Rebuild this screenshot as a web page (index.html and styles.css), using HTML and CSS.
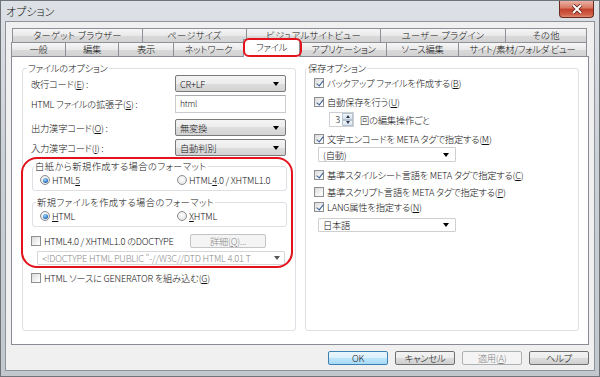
FILE: index.html
```html
<!DOCTYPE html>
<html lang="ja">
<head>
    <meta charset="UTF-8">
    <meta name="viewport" content="width=device-width, initial-scale=1.0">
    <title>オプション</title>
    <link rel="stylesheet" href="styles.css">
</head>
<body>

<div class="window">
    <div class="titlebar">
        <span class="title">オプション</span>
        <span class="close-btn">
            <svg width="12" height="10" viewBox="0 0 12 10">
                <path d="M2 1 L10 9 M10 1 L2 9" stroke="#5b1d14" stroke-width="3.6"/>
                <path d="M2 1 L10 9 M10 1 L2 9" stroke="#fff" stroke-width="2"/>
            </svg>
        </span>
    </div>

    <div class="client">
        <!-- tab headers, two rows -->
        <div class="tab-row row-back">
            <div class="tab">ターゲット ブラウザー</div>
            <div class="tab">ページサイズ</div>
            <div class="tab">ビジュアルサイトビュー</div>
            <div class="tab">ユーザー プラグイン</div>
            <div class="tab">その他</div>
        </div>
        <div class="tab-row row-front">
            <div class="tab">一般</div>
            <div class="tab">編集</div>
            <div class="tab">表示</div>
            <div class="tab">ネットワーク</div>
            <div class="tab active">ファイル</div>
            <div class="tab">アプリケーション</div>
            <div class="tab">ソース編集</div>
            <div class="tab">サイト/素材/フォルダ ビュー</div>
        </div>

        <div class="panel">
            <fieldset class="group group-file">
                <legend>ファイルのオプション</legend>

                <div class="field-row">
                    <span>改行コード(<u>E</u>) :</span>
                    <div class="combo">CR+LF<i class="arrow"></i></div>
                </div>
                <div class="field-row">
                    <span>HTML ファイルの拡張子(<u>S</u>) :</span>
                    <div class="textbox">html</div>
                </div>
                <div class="field-row gap">
                    <span>出力漢字コード(<u>O</u>) :</span>
                    <div class="combo">無変換<i class="arrow"></i></div>
                </div>
                <div class="field-row">
                    <span>入力漢字コード(<u>I</u>) :</span>
                    <div class="combo">自動判別<i class="arrow"></i></div>
                </div>

                <div class="highlight">
                    <fieldset class="subgroup sub-blank">
                        <legend>白紙から新規作成する場合のフォーマット</legend>
                        <div class="radio-row">
                            <label class="opt"><span class="radio on"></span>HTML<u>5</u></label>
                            <label class="opt"><span class="radio"></span>HTML<u>4</u>.0 / XHTML1.0</label>
                        </div>
                    </fieldset>
                    <fieldset class="subgroup sub-new">
                        <legend>新規ファイルを作成する場合のフォーマット</legend>
                        <div class="radio-row">
                            <label class="opt"><span class="radio on"></span><u>H</u>TML</label>
                            <label class="opt"><span class="radio"></span><u>X</u>HTML</label>
                        </div>
                    </fieldset>
                    <div class="doctype-row">
                        <label class="opt"><span class="check"></span>HTML4.0 / XHTML1.0 のDOCTYPE</label>
                        <div class="btn-detail">詳細(<u>Q</u>)...</div>
                    </div>
                    <div class="combo combo-doctype">&lt;!DOCTYPE HTML PUBLIC "-//W3C//DTD HTML 4.01 T<i class="arrow"></i></div>
                </div>

                <div class="check-row generator">
                    <label class="opt"><span class="check"></span>HTML ソースに GENERATOR を組み込む(<u>G</u>)</label>
                </div>
            </fieldset>

            <fieldset class="group group-save">
                <legend>保存オプション</legend>

                <div class="check-row mt1">
                    <label class="opt"><span class="check on"></span>バックアップ ファイルを作成する(<u>B</u>)</label>
                </div>
                <div class="check-row mt5">
                    <label class="opt"><span class="check on"></span>自動保存を行う(<u>U</u>)</label>
                </div>
                <div class="spin-row">
                    <div class="spin">
                        <span class="spin-value">3</span>
                        <span class="spin-arrows"><i class="up"></i><i class="down"></i></span>
                    </div>
                    <span>回の編集操作ごと</span>
                </div>
                <div class="check-row mt5">
                    <label class="opt"><span class="check on"></span>文字エンコードを META タグで指定する(<u>M</u>)</label>
                </div>
                <div class="combo combo-plain auto">(自動)<i class="arrow"></i></div>
                <div class="check-row mt6">
                    <label class="opt"><span class="check on"></span>基準スタイルシート言語を META タグで指定する(<u>C</u>)</label>
                </div>
                <div class="check-row mt3">
                    <label class="opt"><span class="check"></span>基準スクリプト言語を META タグで指定する(<u>P</u>)</label>
                </div>
                <div class="check-row mt1">
                    <label class="opt"><span class="check on"></span>LANG属性を指定する(<u>N</u>)</label>
                </div>
                <div class="combo combo-plain lang">日本語<i class="arrow"></i></div>
            </fieldset>
        </div>

        <div class="buttons">
            <div class="btn default">OK</div>
            <div class="btn">キャンセル</div>
            <div class="btn disabled">適用(<u>A</u>)</div>
            <div class="btn">ヘルプ</div>
        </div>
    </div>
</div>

</body>
</html>
```

FILE: styles.css
```css
* {
    box-sizing: border-box;
}

body {
    margin: 0;
    font-family: "Noto Sans CJK JP", "Noto Sans", sans-serif;
    font-size: 9.3px;
    font-weight: 300;
    letter-spacing: -0.25px;
    font-feature-settings: "palt";
    color: #111;
}

u {
    text-decoration: underline;
    text-underline-offset: 1px;
}

/* window frame */
.window {
    width: 600px;
    height: 377px;
    border: 1px solid #6f747a;
    background: linear-gradient(#dde1e6, #ccd1d7 40%, #c3c8ce);
    padding: 0 4px 5px 4px;
    display: flex;
    flex-direction: column;
}

.titlebar {
    height: 20px;
    display: flex;
    justify-content: space-between;
    align-items: flex-start;
}

.title {
    font-size: 11px;
    letter-spacing: 0;
    line-height: 15px;
    padding: 3px 0 0 1px;
}

.close-btn {
    width: 35px;
    height: 17px;
    margin-right: 1px;
    border: 1px solid #6a2a20;
    border-top: none;
    border-radius: 0 0 4px 4px;
    background: linear-gradient(#eab1a3, #d87560 45%, #c2402c 50%, #d1604a 85%, #e08a6e);
    display: flex;
    align-items: center;
    justify-content: center;
}

.client {
    flex: 1;
    background: #f0f0f0;
    border: 1px solid #8e9399;
    padding: 6px 5px 0 5px;
    display: flex;
    flex-direction: column;
}

/* tabs */
.tab-row {
    display: flex;
    height: 14px;
}

.row-back {
    margin-left: 1px;
}

.row-back .tab {
    letter-spacing: 0.3px;
}

.tab {
    border: 1px solid #8d9096;
    border-right: none;
    border-bottom: none;
    background: linear-gradient(#f6f6f6, #e9e9e9 50%, #dadada 50%, #d2d2d2);
    text-align: center;
    line-height: 12px;
    white-space: nowrap;
}

.tab:last-child {
    border-right: 1px solid #8d9096;
}

.row-back .tab:nth-child(1) { width: 130px; }
.row-back .tab:nth-child(2) { width: 104px; }
.row-back .tab:nth-child(3) { width: 134px; }
.row-back .tab:nth-child(4) { width: 125px; }
.row-back .tab:nth-child(5) { width: 82px; }

.row-front .tab:nth-child(1) { width: 54px; }
.row-front .tab:nth-child(2) { width: 53px; }
.row-front .tab:nth-child(3) { width: 55px; }
.row-front .tab:nth-child(4) { width: 70px; }
.row-front .tab:nth-child(5) { width: 57px; }
.row-front .tab:nth-child(6) { width: 86px; }
.row-front .tab:nth-child(7) { width: 72px; }
.row-front .tab:nth-child(8) { width: 129px; }

.tab.active {
    position: relative;
    top: -3px;
    height: 18px;
    z-index: 1;
    background: #fff;
    border-right: 1px solid #8d9096;
    line-height: 15px;
}

/* red marker drawn over the selected tab */
.tab.active::after {
    content: "";
    position: absolute;
    left: -1px;
    right: -3px;
    top: -2px;
    bottom: 0;
    border: 2px solid #e4131b;
    border-radius: 6px;
}

.panel {
    height: 289px;
    background: #fff;
    border: 1px solid #898c95;
    padding: 5px 9px 13px 10px;
    display: flex;
    gap: 9px;
}

/* group boxes */
.group,
.subgroup {
    margin: 0;
    min-width: 0;
    border: 1px solid #dcdfe3;
    border-radius: 3px;
}

.group {
    padding: 0 9px 0 8px;
}

legend {
    line-height: 13px;
    padding: 0 1px;
    white-space: nowrap;
}

.group-file {
    width: 274px;
    position: relative;
}

.group-file > legend {
    margin-left: -4px;
}

.group-save {
    flex: 1;
}

.group-save > legend {
    margin-left: -7px;
}

.field-row {
    display: flex;
    align-items: center;
    justify-content: space-between;
    height: 17px;
}

.field-row + .field-row {
    margin-top: 3px;
}

.field-row.gap {
    margin-top: 7px;
}

.combo {
    width: 111px;
    height: 17px;
    border: 1px solid #7a7a7a;
    border-radius: 2px;
    background: linear-gradient(#f4f4f4, #ececec 50%, #dedede 50%, #d3d3d3);
    padding: 0 6px 0 4px;
    display: flex;
    align-items: center;
    justify-content: space-between;
    white-space: nowrap;
    overflow: hidden;
}

.arrow {
    flex: none;
    width: 0;
    height: 0;
    border-left: 3.5px solid transparent;
    border-right: 3.5px solid transparent;
    border-top: 4px solid #000;
}

.combo-plain {
    background: #fff;
    border-color: #cfcfcf;
    border-radius: 1px;
    width: 138px;
    margin-left: 4px;
}

.combo-plain.auto {
    height: 15px;
    margin-top: 1px;
}

.combo-plain.lang {
    height: 14px;
    margin-top: 4px;
}

.textbox {
    width: 111px;
    height: 18px;
    border: 1px solid #c9cbd0;
    border-top-color: #a9abb1;
    background: #fff;
    padding: 1px 4px;
    font-size: 8.5px;
    line-height: 12px;
}

/* area circled in red */
.highlight {
    position: relative;
    margin-top: 4px;
}

.highlight::after {
    content: "";
    position: absolute;
    left: -10px;
    right: -7px;
    top: -3px;
    bottom: -3px;
    border: 2px solid #e4131b;
    border-radius: 16px;
}

.subgroup {
    margin-left: 1px;
    margin-right: -1px;
    padding: 0 7px 5px 7px;
}

.subgroup > legend {
    letter-spacing: 0.4px;
}

.sub-blank > legend {
    margin-left: -6px;
}

.sub-new {
    margin-top: 5px;
}

.sub-new > legend {
    margin-left: -4px;
}

.radio-row {
    display: grid;
    grid-template-columns: 137px 1fr;
    height: 12px;
    align-items: center;
}

.opt {
    display: flex;
    align-items: center;
    white-space: nowrap;
}

.radio {
    width: 10px;
    height: 10px;
    margin-right: 2px;
    border-radius: 50%;
    border: 1px solid #8a8d92;
    background: radial-gradient(circle at 50% 40%, #fff, #dcdcdc);
    display: flex;
    align-items: center;
    justify-content: center;
}

.radio.on::after {
    content: "";
    width: 5px;
    height: 5px;
    border-radius: 50%;
    background: radial-gradient(circle at 40% 35%, #a6dcff, #2a76c4 60%, #1a4f8c);
}

.check {
    position: relative;
    flex: none;
    width: 10px;
    height: 10px;
    margin-right: 3px;
    border: 1px solid #8e8f92;
    background: linear-gradient(135deg, #d9d9d9, #f7f7f7 70%, #fff);
}

.check.on::after {
    content: "";
    position: absolute;
    left: 2.5px;
    top: 0;
    width: 3px;
    height: 6px;
    border: solid #3e5f95;
    border-width: 0 1.5px 1.5px 0;
    transform: rotate(38deg);
}

.doctype-row {
    display: flex;
    align-items: center;
    height: 15px;
    margin-top: 6px;
}

.btn-detail {
    margin-left: auto;
    margin-right: 20px;
    width: 76px;
    height: 14px;
    border: 1px solid #c2c4c7;
    border-radius: 2px;
    background: #f4f4f4;
    color: #8d8d8d;
    text-align: center;
    line-height: 12px;
}

.combo-doctype {
    width: 248px;
    height: 14px;
    margin-top: 3px;
    margin-left: 6px;
    background: #fff;
    border-color: #d7d7d7;
    border-radius: 1px;
    color: #8a8a8a;
    padding-right: 4px;
}

.combo-doctype .arrow {
    border-top-color: #555;
}

.check-row {
    display: flex;
    align-items: center;
    height: 14px;
}

.generator {
    height: 12px;
    margin-top: 7px;
}

.mt1 { margin-top: 1px; }
.mt3 { margin-top: 3px; }
.mt5 { margin-top: 5px; }
.mt6 { margin-top: 6px; }

.spin-row {
    display: flex;
    align-items: center;
    gap: 6px;
    height: 15px;
    margin-top: 3px;
    margin-left: 15px;
}

.spin {
    display: flex;
    width: 25px;
    height: 15px;
    border: 1px solid #cfd0d3;
    background: #fff;
}

.spin-value {
    flex: 1;
    text-align: right;
    padding-right: 2px;
    line-height: 13px;
}

.spin-arrows {
    width: 11px;
    display: flex;
    flex-direction: column;
}

.spin-arrows i {
    flex: 1;
    border: 1px solid #b7c3d0;
    background: linear-gradient(#f2f6fa, #d7e2ee);
    display: flex;
    align-items: center;
    justify-content: center;
}

.spin-arrows .up::after {
    content: "";
    border-left: 2.5px solid transparent;
    border-right: 2.5px solid transparent;
    border-bottom: 3px solid #2d3a4c;
}

.spin-arrows .down::after {
    content: "";
    border-left: 2.5px solid transparent;
    border-right: 2.5px solid transparent;
    border-top: 3px solid #2d3a4c;
}

/* dialog buttons */
.buttons {
    display: flex;
    justify-content: flex-end;
    gap: 7px;
    margin-top: 6px;
}

.btn {
    width: 60px;
    height: 14px;
    border: 1px solid #707070;
    border-radius: 2px;
    background: linear-gradient(#f3f3f3, #ececec 50%, #dddddd 50%, #cfcfcf);
    text-align: center;
    line-height: 12px;
}

.btn.default {
    border-color: #3c7fb1;
    background: linear-gradient(#eaf6fd, #d9f0fc 50%, #bee6fd 50%, #a7d9f5);
}

.btn.disabled {
    border-color: #adb2b5;
    background: #f4f4f4;
    color: #838383;
}
```
